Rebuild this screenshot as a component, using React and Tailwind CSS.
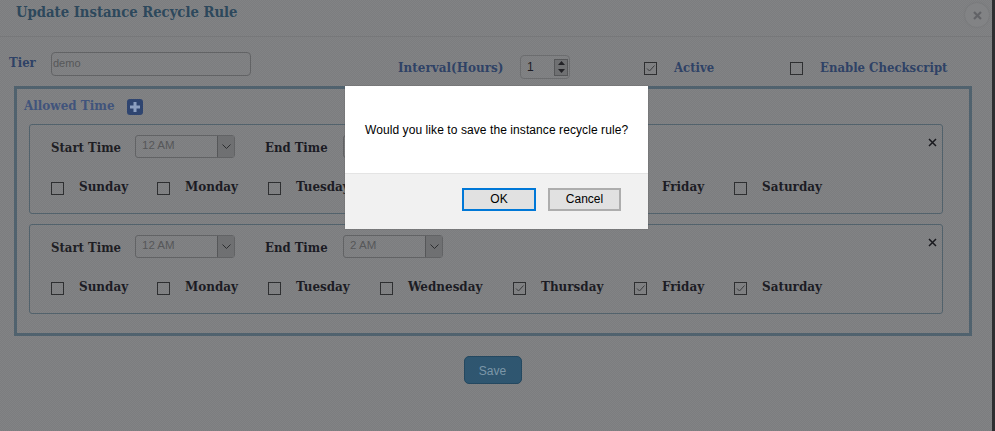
const serif = "font-['DejaVu_Serif_Condensed','DejaVu_Serif',serif] font-bold";
const sans = "font-['Liberation_Sans',Arial,sans-serif]";

function Check({ checked }) {
  return (
    <span className="flex h-[13px] w-[13px] shrink-0 items-center justify-center border border-[#2e2f31]">
      {checked && (
        <svg width="11" height="11" viewBox="0 0 11 11" fill="none">
          <path d="M2 5.5 L4.5 8 L9.5 2.5" stroke="#3c3d3f" strokeWidth="1" />
        </svg>
      )}
    </span>
  );
}

function Day({ label, checked, width }) {
  return (
    <div className={`flex items-start ${width}`}>
      <span className="mt-[3px]"><Check checked={checked} /></span>
      <span className={`${serif} ml-[15px] text-[13.3px] leading-[16px] text-[#1c1c24]`}>{label}</span>
    </div>
  );
}

function Sel({ value, width }) {
  return (
    <div className={`flex h-[23px] ${width} items-stretch rounded-[3px] border border-[#626365]`}>
      <span className={`${sans} flex-1 pl-1.5 text-[11.5px] leading-[18px] text-[#565759]`}>{value}</span>
      <span className="flex w-[17px] items-center justify-center border-l border-[#565759] bg-[#6f7072]">
        <svg width="11" height="7" viewBox="0 0 11 7" fill="none">
          <path d="M1.5 1.5 L5.5 5.5 L9.5 1.5" stroke="#2c2d2f" strokeWidth="1" />
        </svg>
      </span>
    </div>
  );
}

function TimeCard({ start, end, checked = [] }) {
  const days = [
    ["Sunday", "w-[106px]"],
    ["Monday", "w-[111px]"],
    ["Tuesday", "w-[112px]"],
    ["Wednesday", "w-[133px]"],
    ["Thursday", "w-[121px]"],
    ["Friday", "w-[100px]"],
    ["Saturday", "w-[100px]"],
  ];
  return (
    <div className="relative h-[90px] rounded-[3px] border border-[#52626c] pl-[21px] pt-[10px]">
      <div className="flex items-center">
        <span className={`${serif} w-[84px] pt-[2px] text-[13px] text-[#1e1e24]`}>Start Time</span>
        <Sel value={start} width="w-[100px]" />
        <span className={`${serif} ml-[30px] w-[78px] pt-[2px] text-[13px] text-[#1b1b24]`}>End Time</span>
        <Sel value={end} width="w-[100px]" />
      </div>
      <div className="mt-[21px] flex">
        {days.map(([d, w]) => (
          <Day key={d} label={d} width={w} checked={checked.includes(d)} />
        ))}
      </div>
      <svg className="absolute right-[5px] top-[13px]" width="9" height="9" viewBox="0 0 9 9" fill="none">
        <path d="M1 1 L8 8 M8 1 L1 8" stroke="#1a1a1f" strokeWidth="1.5" />
      </svg>
    </div>
  );
}

export default function App() {
  return (
    <div className="relative flex h-[431px] w-[995px] overflow-hidden bg-[#2e2e30]">
      <div className="relative h-full w-[992px] bg-[#7f8082] bg-[repeating-conic-gradient(#7c7d7f_0_25%,#828385_0_50%)] bg-[length:2px_2px]">
        <div className="h-[37px] border-b border-[#77787a] pl-4 pt-[1px]">
          <h1 className={`${serif} text-[14.7px] leading-[22px] text-[#2d485c]`}>Update Instance Recycle Rule</h1>
        </div>
        <span className="absolute right-[3px] top-[3px] flex h-6 w-6 items-center justify-center rounded-full bg-[#828385] shadow-[0_0_2px_#6f7072]">
          <svg width="9" height="9" viewBox="0 0 9 9" fill="none">
            <path d="M1 1 L8 8 M8 1 L1 8" stroke="#626367" strokeWidth="2.2" />
          </svg>
        </span>

        <div className="relative flex h-[39px] items-start pt-[15px]">
          <span className={`${serif} ml-[9px] mt-[2px] w-[42px] text-[13px] leading-[18px] text-[#2f4266]`}>Tier</span>
          <div className={`${sans} h-[24px] w-[200px] rounded-[4px] border border-[#626365] pl-[1px] text-[11px] leading-[20px] text-[#565759]`}>demo</div>
          <span className={`${serif} ml-[147px] mt-[7px] w-[122px] text-[13.3px] leading-[18px] text-[#2f4266]`}>Interval(Hours)</span>
          <div className="mt-[3px] flex h-[24px] w-[50px] items-center justify-between rounded-[4px] border border-[#6c6d6f] pl-[6px] pr-[1px]">
            <span className={`${sans} text-[12px] text-[#1c1c24]`}>1</span>
            <span className="flex h-[17px] w-[14px] flex-col items-center justify-around border border-[#565759] bg-[#6f7072]">
              <svg width="7" height="4" viewBox="0 0 7 4"><path d="M0 4 L3.5 0 L7 4 Z" fill="#222226" /></svg>
              <svg width="7" height="4" viewBox="0 0 7 4"><path d="M0 0 L3.5 4 L7 0 Z" fill="#222226" /></svg>
            </span>
          </div>
          <span className="ml-[74px] mt-[10px]"><Check checked /></span>
          <span className={`${serif} ml-[17px] mt-[7px] w-[116px] text-[13px] leading-[18px] text-[#2f4266]`}>Active</span>
          <span className="mt-[10px]"><Check /></span>
          <span className={`${serif} ml-[17px] mt-[7px] text-[13px] leading-[18px] text-[#2f4266]`}>Enable Checkscript</span>
        </div>

        <div className="ml-[14px] mt-[10px] h-[250px] w-[958px] border-[3px] border-[#50626e] pl-3 pr-[26px] pt-[8px]">
          <div className="flex h-[27px] items-start">
            <span className={`${serif} ml-[-5px] text-[13.3px] leading-[18px] text-[#41547c]`}>Allowed Time</span>
            <span className="ml-3 mt-[2px] flex h-4 w-4 items-center justify-center rounded-[3px] bg-[#2f4570]">
              <svg width="12" height="12" viewBox="0 0 12 12"><path d="M4.5 1h3v3.5H11v3H7.5V11h-3V7.5H1v-3h3.5z" fill="#8c9fc0" /></svg>
            </span>
          </div>
          <div className="flex flex-col gap-[10px]">
            <TimeCard start="12 AM" end="2 AM" />
            <TimeCard start="12 AM" end="2 AM" checked={["Thursday", "Friday", "Saturday"]} />
          </div>
        </div>

        <div className="mt-[20px] flex justify-center">
          <button className={`${sans} ml-[-7px] h-[28px] w-[58px] rounded-[5px] border border-[#244860] bg-[#2f5670] pt-[2px] text-[12px] text-[#7c96a8]`}>Save</button>
        </div>
      </div>

      <div className="absolute left-[345px] top-[86px] flex h-[143px] w-[303px] flex-col bg-white shadow-[0_0_1px_#555]">
        <div className={`${sans} flex h-[87px] items-center pl-5 text-[12px] tracking-[0.08px] text-black`}>Would you like to save the instance recycle rule?</div>
        <div className="flex flex-1 justify-end gap-3 border-t border-[#e4e4e4] bg-[#f1f1f1] pr-[27px] pt-[14px]">
          <button className={`${sans} h-[23px] w-[74px] border-2 border-[#0078d7] bg-[#e1e1e1] pb-[2px] text-[12px] text-black`}>OK</button>
          <button className={`${sans} h-[23px] w-[73px] border-2 border-[#adadad] bg-[#e1e1e1] pb-[2px] text-[12px] text-black`}>Cancel</button>
        </div>
      </div>
    </div>
  );
}
